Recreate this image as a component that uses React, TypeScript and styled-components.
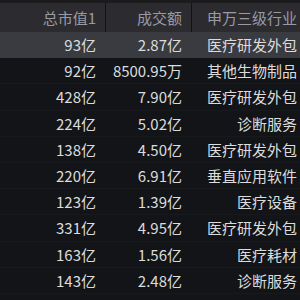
import React from 'react';
import styled, { createGlobalStyle } from 'styled-components';

const rows = [
    { cap: '93亿', amount: '2.87亿', industry: '医疗研发外包' },
    { cap: '92亿', amount: '8500.95万', industry: '其他生物制品' },
    { cap: '428亿', amount: '7.90亿', industry: '医疗研发外包' },
    { cap: '224亿', amount: '5.02亿', industry: '诊断服务' },
    { cap: '138亿', amount: '4.50亿', industry: '医疗研发外包' },
    { cap: '220亿', amount: '6.91亿', industry: '垂直应用软件' },
    { cap: '123亿', amount: '1.39亿', industry: '医疗设备' },
    { cap: '331亿', amount: '4.95亿', industry: '医疗研发外包' },
    { cap: '163亿', amount: '1.56亿', industry: '医疗耗材' },
    { cap: '143亿', amount: '2.48亿', industry: '诊断服务' },
];

const GlobalStyle = createGlobalStyle`
    html, body {
        margin: 0;
        padding: 0;
        background: #121418;
        overflow: hidden;
    }
`

function App() {
    return (
        <Main>
            <GlobalStyle />
            <TopStrip />
            <Header>
                <HeadCell>总市值1</HeadCell>
                <HeadCell divider>成交额</HeadCell>
                <HeadCell divider last>申万三级行业</HeadCell>
            </Header>
            {rows.map((r, i) => (
                <Row key={i} selected={i === 0}>
                    <Cell>{r.cap}</Cell>
                    <Cell>{r.amount}</Cell>
                    <Cell last>{r.industry}</Cell>
                </Row>
            ))}
        </Main>
    )
}

const Main = styled.div`
    width: 300px;
    height: 300px;
    background: #121418;
    font-family: "Noto Sans CJK SC", "Noto Sans", sans-serif;
    overflow: hidden;
`

const TopStrip = styled.div`
    height: 3px;
    background: #1b1b1e;
`

const Header = styled.div`
    display: grid;
    grid-template-columns: 105px 86px 109px;
    height: 29px;
    background: #2c2c30;
`

const HeadCell = styled.div<{ divider?: boolean; last?: boolean }>`
    display: flex;
    align-items: center;
    justify-content: flex-end;
    padding-right: ${p => (p.last ? '3px' : '9px')};
    border-left: ${p => (p.divider ? '1px solid #131316' : 'none')};
    color: #9a9aa4;
    font-size: 15px;
    white-space: nowrap;
`

const Row = styled.div<{ selected?: boolean }>`
    display: grid;
    grid-template-columns: 105px 86px 109px;
    height: 26.2px;
    box-sizing: border-box;
    background: ${p => (p.selected ? '#3a3b40' : '#121418')};
    border-bottom: 1px solid ${p => (p.selected ? '#3a3b40' : '#17191d')};
`

const Cell = styled.div<{ last?: boolean }>`
    display: flex;
    align-items: center;
    justify-content: flex-end;
    padding-right: ${p => (p.last ? '3px' : '9px')};
    color: #dcdcdc;
    font-size: 15px;
    white-space: nowrap;
`

export default App
